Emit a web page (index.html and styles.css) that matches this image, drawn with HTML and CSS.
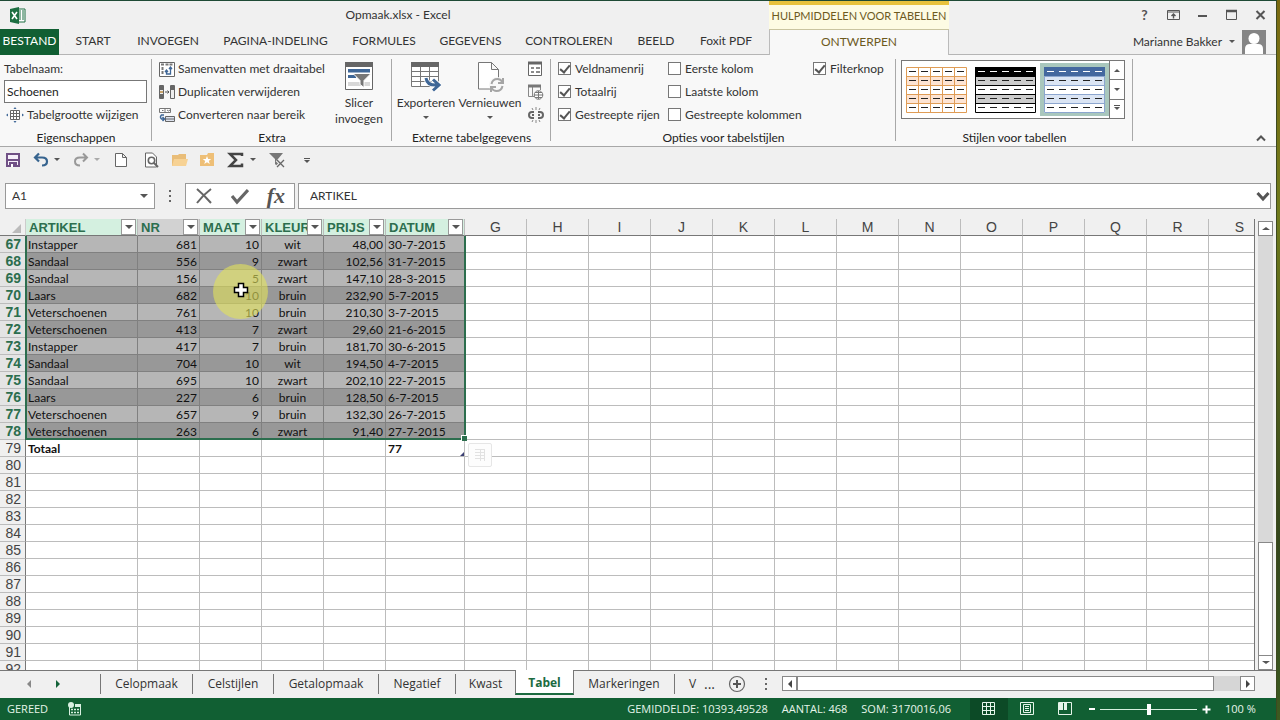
FILE: index.html
```html
<!DOCTYPE html>
<html lang="nl">
<head>
<meta charset="utf-8">
<title>Opmaak.xlsx - Excel</title>
<link rel="stylesheet" href="styles.css">
</head>
<body>
<div class="window">
  <header class="top">
    <div class="top-left">
      <div class="titlebar">
        <svg class="logo" width="18" height="17" viewBox="0 0 18 17"><path d="M9 2h7v13H9z" fill="#fff" stroke="#1d6f42"/><path d="M10 4h2M13 4h2M10 6h2M13 6h2M10 8h2M13 8h2M10 10h2M13 10h2M10 12h2M13 12h2" stroke="#1d6f42"/><path d="M1 2l9-2v17l-9-2z" fill="#1d6f42"/><path d="M3 5l5 7M8 5l-5 7" stroke="#fff" stroke-width="1.6"/></svg>
        <h1 class="title">Opmaak.xlsx - Excel</h1>
      </div>
      <nav class="tabs">
        <button class="tab file">BESTAND</button>
        <button class="tab w64">START</button>
        <button class="tab w86">INVOEGEN</button>
        <button class="tab w129">PAGINA-INDELING</button>
        <button class="tab w88">FORMULES</button>
        <button class="tab w85">GEGEVENS</button>
        <button class="tab w112">CONTROLEREN</button>
        <button class="tab w62">BEELD</button>
        <button class="tab w78">Foxit PDF</button>
      </nav>
    </div>
    <div class="context">
      <div class="context-title">HULPMIDDELEN VOOR TABELLEN</div>
      <button class="tab active">ONTWERPEN</button>
    </div>
    <div class="top-right">
      <div class="sys">
        <button class="sysbtn help" aria-label="Help">?</button>
        <button class="sysbtn" aria-label="Weergaveopties"><svg width="13" height="12" viewBox="0 0 13 12"><path d="M.5 1.5h12v9H.5zM.5 3h12" fill="none" stroke="#555"/><path d="M6.500 9.500V5M4.500 7l2-2 2 2" fill="none" stroke="#555" stroke-width="1.400"/></svg></button>
        <button class="sysbtn" aria-label="Minimaliseren"><svg width="11" height="12" viewBox="0 0 11 12"><path d="M1 7h9" stroke="#555" stroke-width="2"/></svg></button>
        <button class="sysbtn" aria-label="Maximaliseren"><svg width="11" height="12" viewBox="0 0 11 12"><path d="M.5 1.500h10v9H.5z" fill="none" stroke="#555"/><path d="M0 2h11" stroke="#555" stroke-width="2.500"/></svg></button>
        <button class="sysbtn" aria-label="Sluiten"><svg width="11" height="12" viewBox="0 0 11 12"><path d="M1.500 2l8 8M9.500 2l-8 8" stroke="#555" stroke-width="2"/></svg></button>
      </div>
      <div class="user"><span>Marianne Bakker</span><i class="caret"></i>
        <svg width="24" height="24" viewBox="0 0 24 24"><path d="M0 0h24v24H0z" fill="#858585"/><circle cx="12" cy="8.500" r="5.500" fill="#fff"/><path d="M3 24v-5q0-5 5-5h8q5 0 5 5v5z" fill="#fff"/></svg>
      </div>
    </div>
  </header>

  <section class="ribbon">
    <div class="group g-props">
      <div class="content col">
        <label class="line" for="tname">Tabelnaam:</label>
        <input id="tname" class="name-input" value="Schoenen">
        <button class="line cmd"><svg width="18" height="16" viewBox="0 0 18 16"><path d="M4.500 3.500h9v9h-9zM4.500 6.500h9M4.500 9.500h9M7.500 3.500v9M10.500 3.500v9" fill="#fff" stroke="#666"/><path d="M0 8l2-1.500v3zM18 8l-2-1.500v3zM9 0l1.500 2h-3zM9 16l1.500-2h-3z" fill="#3f6797"/></svg>Tabelgrootte wijzigen</button>
      </div>
      <div class="caption">Eigenschappen</div>
    </div>
    <div class="group g-extra">
      <div class="content">
        <div class="col">
          <button class="line cmd"><svg width="16" height="16" viewBox="0 0 16 16"><path d="M.5 1.500h15v14H.5z" fill="#fff" stroke="#666"/><path d="M2 3.500h3M6.500 3.500h7M3.500 6v8" stroke="#777" stroke-width="2" stroke-dasharray="3 1"/><path d="M7.500 10v3h4V7M6 11l1.500-2L9 11M10 8l1.500-2L13 8" fill="none" stroke="#3f6797" stroke-width="1.300"/></svg>Samenvatten met draaitabel</button>
          <button class="line cmd"><svg width="16" height="16" viewBox="0 0 16 16"><path d="M.5 1.500h4v13h-4zM11.500 1.500h4v13h-4z" fill="#eee" stroke="#666"/><path d="M1 2h3v4H1zM1 10h3v4H1zM12 2h3v4h-3z" fill="#666"/><path d="M1 7h3v2H1z" fill="#c9a46b"/><path d="M6 8h4M8.500 6.500L10 8 8.500 9.500" fill="none" stroke="#555"/></svg>Duplicaten verwijderen</button>
          <button class="line cmd"><svg width="16" height="16" viewBox="0 0 16 16"><path d="M.5 1.500h11v4H.5zM6 1.500v4M3 3.500h1.500M8 3l1.500 1L11 3" fill="#fff" stroke="#777"/><path d="M6.500 9.500h9v5h-9zM6.500 12h9" fill="#dde3ef" stroke="#666"/><path d="M5 8H2.500q-2 2 0 4H5M3.500 10L5.500 12l-2 2" fill="none" stroke="#3f6797" stroke-width="1.500"/></svg>Converteren naar bereik</button>
        </div>
        <button class="big w66"><svg width="29" height="30" viewBox="0 0 29 30"><path d="M.5 2.500h27v26H.5z" fill="#fff" stroke="#666"/><path d="M0 1h28v5H0z" fill="#666"/><path d="M3 8h22v3.500H3zM3 14h8v3H3z" fill="#3f6797"/><path d="M3 21h22v4H3z" fill="#d8d8d8"/><path d="M8 12.500h18l-7 7v7l-4-3v-4z" fill="#777" stroke="#fff"/></svg><span>Slicer</span><span>invoegen</span></button>
      </div>
      <div class="caption">Extra</div>
    </div>
    <div class="group g-ext">
      <div class="content">
        <button class="big w64"><svg width="30" height="32" viewBox="0 0 30 32"><path d="M.5 1.500h27v24H.5zM.5 10.500h27M.5 15.500h27M.5 20.500h27M9.500 5v20M18.500 5v20" fill="#fff" stroke="#777"/><path d="M0 1h28v5H0z" fill="#666"/><path d="M15 17q1 8 12 7M22 18.500l6 5.500-6 5.500" fill="none" stroke="#fff" stroke-width="5"/><path d="M15 17q1 8 12 7M22 18.500l6 5.500-6 5.500" fill="none" stroke="#3f6797" stroke-width="3"/></svg><span>Exporteren</span><i class="caret"></i></button>
        <button class="big w64"><svg width="30" height="32" viewBox="0 0 30 32"><path d="M3.500 1.500h13l7 7v19.500h-20zM16.500 1.500v7h7" fill="#fff" stroke="#777"/><circle cx="22" cy="24" r="8" fill="#f8f8f8"/><path d="M16.500 23q1-5 6-5 3 0 5 3M28 17v5h-5M27.500 25q-1 5-6 5-3 0-5-3M16 31v-5h5" fill="none" stroke="#a5a5a5" stroke-width="2"/></svg><span>Vernieuwen</span><i class="caret"></i></button>
        <div class="col smalls">
          <button class="line" aria-label="Eigenschappen"><svg width="15" height="16" viewBox="0 0 15 16"><path d="M.5 1.500h13v13H.5z" fill="#fff" stroke="#666"/><path d="M0 2h14" stroke="#666" stroke-width="3"/><path d="M3 7h3M8 7h4M3 11h3M8 11h4" stroke="#666" stroke-width="1.500"/></svg></button>
          <button class="line" aria-label="Openen in browser"><svg width="16" height="16" viewBox="0 0 16 16"><path d="M7 12.500H.5v-11h12V6M4.500 3v9" fill="none" stroke="#888"/><path d="M0 2h13" stroke="#777" stroke-width="3"/><circle cx="10.500" cy="11" r="4.300" fill="#fff" stroke="#777"/><path d="M6 11h9M7 8.500h7M7 13.500h7M10.500 7v8" stroke="#777"/></svg></button>
          <button class="line" aria-label="Ontkoppelen"><svg width="16" height="16" viewBox="0 0 16 16"><path d="M6 5H4Q1 5 1 8t3 3h2M10 5h2q3 0 3 3t-3 3h-2M4 8h2M10 8h2" fill="none" stroke="#666" stroke-width="2"/><path d="M5 3L4 1M8 3V0M11 3l1-2M5 13l-1 2M8 13v3M11 13l1 2" stroke="#888"/></svg></button>
        </div>
      </div>
      <div class="caption">Externe tabelgegevens</div>
    </div>
    <div class="group g-opts">
      <div class="content checks">
        <label class="line chk"><input type="checkbox" checked>Veldnamenrij</label>
        <label class="line chk"><input type="checkbox">Eerste kolom</label>
        <label class="line chk"><input type="checkbox" checked>Filterknop</label>
        <label class="line chk"><input type="checkbox" checked>Totaalrij</label>
        <label class="line chk"><input type="checkbox">Laatste kolom</label>
        <i></i>
        <label class="line chk"><input type="checkbox" checked>Gestreepte rijen</label>
        <label class="line chk"><input type="checkbox">Gestreepte kolommen</label>
      </div>
      <div class="caption">Opties voor tabelstijlen</div>
    </div>
    <div class="group g-styles">
      <div class="content">
        <div class="gallery">
          <button class="style" aria-label="Oranje stijl"><svg width="61" height="46" viewBox="0 0 61 46"><path d="M0 0h61v46H0z" fill="#fff"/><path d="M0 9h61v9H0zM0 27h61v9H0z" fill="#fde4d3"/><path d="M.5.5h60v45H.5zM.5 9.500h60M.5 18.500h60M.5 27.500h60M.5 36.500h60M12.500 0v46M24.500 0v46M36.500 0v46M48.500 0v46" fill="none" stroke="#df9c55"/><path d="M3 4.500h56M3 13.500h56M3 22.500h56M3 31.500h56M3 40.500h56" stroke="#222" stroke-dasharray="7 5"/></svg></button>
          <button class="style" aria-label="Zwarte stijl"><svg width="61" height="46" viewBox="0 0 61 46"><path d="M0 0h61v46H0z" fill="#fff"/><path d="M0 9h61v9H0zM0 27h61v9H0z" fill="#ccc"/><path d="M.5.5h60v45H.5zM.5 9.500h60M.5 18.500h60M.5 27.500h60M.5 36.500h60" fill="none" stroke="#000"/><path d="M0 0h61v9H0z"/><path d="M3 4.500h56" stroke="#fff" stroke-dasharray="7 5"/><path d="M3 13.500h56M3 22.500h56M3 31.500h56M3 40.500h56" stroke="#222" stroke-dasharray="7 5"/></svg></button>
          <button class="style chosen" aria-label="Blauwe stijl"><svg width="61" height="46" viewBox="0 0 61 46"><path d="M0 0h61v46H0z" fill="#fff"/><path d="M0 9h61v9H0zM0 27h61v9H0z" fill="#dbe5f4"/><path d="M.5.5h60v45H.5zM.5 9.500h60M.5 18.500h60M.5 27.500h60M.5 36.500h60" fill="none" stroke="#8ca6cf"/><path d="M0 0h61v9H0z" fill="#44689f"/><path d="M3 4.500h56" stroke="#fff" stroke-dasharray="7 5"/><path d="M3 13.500h56M3 22.500h56M3 31.500h56M3 40.500h56" stroke="#222" stroke-dasharray="7 5"/></svg></button>
          <div class="gallery-nav">
            <button aria-label="Omhoog"><i class="caret up"></i></button>
            <button aria-label="Omlaag"><i class="caret"></i></button>
            <button aria-label="Meer"><i class="caret bar"></i></button>
          </div>
        </div>
      </div>
      <div class="caption">Stijlen voor tabellen</div>
    </div>
    <button class="collapse" aria-label="Lint samenvouwen"><svg width="10" height="8" viewBox="0 0 10 8"><path d="M1 6.500l4-4 4 4" fill="none" stroke="#555" stroke-width="2"/></svg></button>
  </section>

  <div class="qat">
    <button class="q w28" aria-label="Opslaan"><svg width="16" height="16" viewBox="0 0 16 16"><path d="M2 2h12v12H2z" fill="#f6f0fa" stroke="#705085" stroke-width="2"/><path d="M3 8h10" stroke="#705085" stroke-width="2"/><path d="M4 10h8v5H4z" fill="#705085"/><path d="M6 12h2v3H6z" fill="#fff"/></svg></button>
    <button class="q w40" aria-label="Ongedaan maken"><svg width="16" height="16" viewBox="0 0 16 16"><path d="M2 5.500h7q5 0 5 4t-5 4M6 1.500l-4 4 4 4" fill="none" stroke="#37648f" stroke-width="2.200"/></svg><i class="caret"></i></button>
    <button class="q w40" aria-label="Opnieuw"><svg width="16" height="16" viewBox="0 0 16 16"><path d="M14 5.500H7q-5 0-5 4t5 4M10 1.500l4 4-4 4" fill="none" stroke="#999" stroke-width="2"/></svg><i class="caret pale"></i></button>
    <button class="q w30" aria-label="Nieuw"><svg width="16" height="16" viewBox="0 0 16 16"><path d="M2.500 1.500h7l4 4v9h-11zM9.500 1.500v4h4" fill="#fff" stroke="#666"/></svg></button>
    <button class="q w28" aria-label="Afdrukvoorbeeld"><svg width="16" height="16" viewBox="0 0 16 16"><path d="M2.500 1h7l4 4v10h-11z" fill="#fff" stroke="#666"/><circle cx="8.500" cy="8.500" r="3.200" fill="#fff" stroke="#666" stroke-width="1.600"/><path d="M11 11l4 4" stroke="#666" stroke-width="2"/></svg></button>
    <button class="q w28" aria-label="Openen"><svg width="18" height="16" viewBox="0 0 18 16"><path d="M1 14V3h6l1-1h7v12z" fill="#e9bd78"/><path d="M3 7h14l-2 7H1z" fill="#f7d294"/></svg></button>
    <button class="q w28" aria-label="Favorieten"><svg width="16" height="16" viewBox="0 0 16 16"><path d="M1 14V3h7l1-2h6v13z" fill="#eebf77"/><path d="M8 4l1.200 3h3L9.800 9l1 3L8 10.200 5.200 12l1-3-2.400-2h3z" fill="#fff"/></svg></button>
    <button class="q w42" aria-label="AutoSom"><svg width="18" height="16" viewBox="0 0 18 16"><path d="M15 4V2H3l6 6-6 6h12v-2.500" fill="none" stroke="#444" stroke-width="2.500"/></svg><i class="caret"></i></button>
    <button class="q w28" aria-label="Filter wissen"><svg width="17" height="16" viewBox="0 0 17 16"><path d="M0 1h14L9 7v8l-3-3V7z" fill="#777"/><path d="M8 8l7 7M15 8l-7 7" stroke="#eee" stroke-width="3.500"/><path d="M8 8l7 7M15 8l-7 7" stroke="#666" stroke-width="1.300"/></svg></button>
    <button class="q w28" aria-label="Aanpassen"><i class="caret bar"></i></button>
  </div>

  <div class="formula">
    <div class="namebox"><input aria-label="Naamvak" value="A1"><i class="caret big-caret"></i></div>
    <svg class="dots" width="4" height="14" viewBox="0 0 4 14"><path d="M1 1h2v2H1zM1 6h2v2H1zM1 11h2v2H1z" fill="#666"/></svg>
    <div class="fx">
      <button aria-label="Annuleren"><svg width="18" height="18" viewBox="0 0 18 18"><path d="M2 2q7 6 14 14M16 2Q8 8 2 16" fill="none" stroke="#666" stroke-width="2"/></svg></button>
      <button aria-label="Invoeren"><svg width="18" height="18" viewBox="0 0 18 18"><path d="M1 9l5 6L17 3" fill="none" stroke="#666" stroke-width="3.200"/></svg></button>
      <button class="fxlabel">fx</button>
    </div>
    <div class="fbox"><input aria-label="Formulebalk" value="ARTIKEL"><svg width="14" height="12" viewBox="0 0 14 12"><path d="M1.500 3L7 9l5.500-6" fill="none" stroke="#555" stroke-width="3"/></svg></div>
  </div>

  <main class="sheet">
    <div class="grid">
      <table class="cells">
        <colgroup id="cols"></colgroup>
        <thead id="head"></thead>
        <tbody id="rows"></tbody>
      </table>
      <div class="selection"><i class="handle"></i></div>
      <i class="resize"></i>
      <div class="quick"><svg width="12" height="14" viewBox="0 0 12 14"><path d="M1 1.500h10M1 4.500h10M1 7.500h10M1 10.500h10M6.500 1v12M10.500 1v12" stroke="#e2e2e2" fill="none"/></svg></div>
      <div class="spot"></div>
      <svg class="cursor" width="16" height="16" viewBox="0 0 16 16"><path d="M5.500 1.500h5v4h4v5h-4v4h-5v-4h-4v-5h4z" fill="#fff" stroke="#000" stroke-width="1.500"/></svg>
    </div>
    <div class="vscroll">
      <button aria-label="Omhoog"><i class="caret up"></i></button>
      <div class="vtrack"><div class="vthumb"></div></div>
      <button aria-label="Omlaag"><i class="caret"></i></button>
    </div>
  </main>

  <footer>
    <div class="sheets">
      <div class="arrows"><svg width="6" height="8" viewBox="0 0 6 8"><path d="M5 0v8L1 4z" fill="#888"/></svg><svg width="6" height="8" viewBox="0 0 6 8"><path d="M1 0v8l4-4z" fill="#14633a"/></svg></div>
      <button class="stab s92">Celopmaak</button>
      <button class="stab s81">Celstijlen</button>
      <button class="stab s105">Getalopmaak</button>
      <button class="stab s77">Negatief</button>
      <button class="stab s59 last">Kwast</button>
      <button class="stab s59 on">Tabel</button>
      <button class="stab s101">Markeringen</button>
      <button class="stab cut">V</button>
      <span class="more">...</span>
      <button class="add" aria-label="Nieuw blad"><svg width="18" height="18" viewBox="0 0 18 18"><circle cx="9" cy="9" r="7.500" fill="none" stroke="#666" stroke-width="1.200"/><path d="M5 9h8M9 5v8" stroke="#555" stroke-width="2"/></svg></button>
      <svg class="dots" width="4" height="14" viewBox="0 0 4 14"><path d="M1 1h2v2H1zM1 6h2v2H1zM1 11h2v2H1z" fill="#666"/></svg>
      <div class="hscroll">
        <button aria-label="Links"><i class="caret left"></i></button>
        <div class="hthumb"></div><div class="htrack"></div>
        <button aria-label="Rechts"><i class="caret right"></i></button>
      </div>
    </div>
    <div class="status">
      <span class="ready">GEREED</span>
      <svg width="14" height="14" viewBox="0 0 14 14"><path d="M1.500 5v8h11V3H7" fill="none" stroke="#d8f0e0"/><path d="M7 2h6v3H7z" fill="#d8f0e0"/><circle cx="3" cy="3" r="3" fill="#d8f0e0"/><path d="M3 7.500h9M3 10.500h9" stroke="#d8f0e0" stroke-dasharray="2 1" stroke-width="1.500"/></svg>
      <div class="stats"><span>GEMIDDELDE: 10393,49528</span><span>AANTAL: 468</span><span>SOM: 3170016,06</span></div>
      <button class="view current" aria-label="Normaal"><svg width="14" height="14" viewBox="0 0 14 14"><path d="M.5.5h12v12H.5zM.5 4.500h12M.5 8.500h12M4.500.5v12M8.500.5v12" fill="none" stroke="#e6f5ea"/></svg></button>
      <button class="view" aria-label="Pagina-indeling"><svg width="14" height="14" viewBox="0 0 14 14"><path d="M.5.500h13v12H.5z" fill="none" stroke="#e6f5ea"/><path d="M3.500 2.500h7v8h-7zM5 4.500h4M5 6.500h4M5 8.500h4" fill="none" stroke="#e6f5ea"/></svg></button>
      <button class="view" aria-label="Pagina-eindevoorbeeld"><svg width="14" height="14" viewBox="0 0 14 14"><path d="M.5.500h13v12H.5z" fill="none" stroke="#e6f5ea"/><path d="M1 1h4v7H1zM6 1h3v7H6z" fill="#e6f5ea"/></svg></button>
      <div class="zoom"><span class="minus"></span><input type="range" aria-label="Zoomen" min="0" max="100" value="50"><svg width="9" height="9" viewBox="0 0 9 9"><path d="M.5 4.500h8M4.500.5v8" stroke="#fff" stroke-width="2"/></svg></div>
      <span class="pct">100 %</span>
    </div>
  </footer>
</div>
<script src="app.js"></script>
</body>
</html>
```
FILE: styles.css
```css
* { box-sizing: border-box; }
html, body { margin: 0; height: 100%; }
body { background: linear-gradient(#7a6a10, #6f7a1c 30%, #33451c 75%, #3d5a20); font: 12px/16px Lato, "Open Sans", sans-serif; color: #333; overflow: hidden; }
button, input { font: inherit; color: inherit; }
button { border: 0; background: none; padding: 0; white-space: nowrap; }
input { margin: 0; min-width: 0; outline: 0; }
svg { display: block; flex: none; }
.window { height: 100vh; margin-right: 3px; display: flex; flex-direction: column; background: #f0f0f0; border-top: 1px solid #1e4a35; border-right: 1px solid #3d4a20; }

.caret { display: block; flex: none; width: 0; height: 0; border: 3px solid transparent; border-top-color: #555; border-bottom: 0; }
.caret.up { border-top: 0; border-bottom: 3px solid #555; }
.caret.left { border: 4px solid transparent; border-right-color: #444; border-left: 0; }
.caret.right { border: 4px solid transparent; border-left-color: #444; border-right: 0; }
.caret.pale { border-top-color: #aaa; }
.caret.bar { position: relative; }
.caret.bar::before { content: ""; position: absolute; left: -3px; top: -5px; width: 6px; height: 1px; background: #555; }
.big-caret { border-width: 4px; border-bottom: 0; }

.top { display: flex; height: 54px; flex: none; }
.top-left, .context, .top-right { display: flex; flex-direction: column; }
.titlebar { display: flex; align-items: center; height: 28px; padding-left: 9px; }
.title { margin: 0; flex: 1; text-align: center; font-size: 12px; font-weight: 400; }
.tabs { display: flex; height: 26px; border-bottom: 1px solid #b5b5b5; padding-right: 4px; }
.tab { text-align: center; height: 24px; }
.file { width: 59px; height: 26px; padding-bottom: 2px; margin-right: 2px; background: #115f33; color: #fff; }
.w64 { width: 64px; } .w86 { width: 86px; } .w129 { width: 129px; } .w88 { width: 88px; } .w85 { width: 85px; }
.w112 { width: 112px; } .w62 { width: 62px; } .w78 { width: 78px; } .w66 { width: 66px; }
.context { width: 180px; color: #6d5a1e; }
.context-title { height: 29px; font-size: 11px; line-height: 22px; background: #fdfbe3; border-top: 4px solid #e8c23c; border-bottom: 1px solid #c9c4a0; text-align: center; white-space: nowrap; }
.active { height: 25px; padding-bottom: 2px; background: #f8f8f8; border: 1px solid #bbb; border-width: 0 1px; }
.top-right { flex: 1; border-bottom: 1px solid #b5b5b5; }
.sys { display: flex; justify-content: flex-end; align-items: center; height: 28px; padding-right: 1px; }
.sysbtn { width: 29px; height: 20px; display: flex; justify-content: center; align-items: center; color: #555; }
.sysbtn.help { font-weight: 700; font-size: 14px; }
.user { display: flex; flex: 1; justify-content: flex-end; align-items: center; gap: 7px; padding-right: 10px; }

.ribbon { flex: none; display: flex; height: 92px; background: #f8f8f8; border-bottom: 1px solid #a8a8a8; }
.group { display: flex; flex-direction: column; position: relative; padding-top: 2px; }
.group::after { content: ""; position: absolute; right: 0; top: 4px; bottom: 5px; width: 1px; background: #a8a8a8; }
.g-props { width: 152px; } .g-extra { width: 240px; } .g-ext { width: 159px; } .g-opts { width: 345px; } .g-styles { width: 237px; }
.content { display: flex; height: 73px; }
.col { display: flex; flex-direction: column; }
.line { height: 23px; display: flex; align-items: center; white-space: nowrap; gap: 3px; }
.g-props .content { padding: 0 4px; }
.g-props .cmd { padding-left: 2px; }
.name-input { height: 23px; width: 143px; border: 1px solid #777; background: #fff; color: #222; padding: 0 2px; }
.caption { text-align: center; color: #222; white-space: nowrap; }
.g-extra .col { padding-left: 7px; width: 174px; }
.g-ext .content { padding-left: 2px; }
.big { display: flex; flex-direction: column; align-items: center; padding-top: 4px; line-height: 16px; }
.big.w66 svg { margin-bottom: 4px; }
.big.w64 svg { margin-bottom: 2px; }
.big .caret { margin-top: 5px; }
.smalls { padding-left: 6px; }
.checks { display: grid; grid-template-columns: 110px 145px auto; grid-auto-rows: 23px; padding-left: 7px; }
.chk { gap: 4px; }
.chk input { appearance: none; width: 13px; height: 13px; border: 1px solid #777; background: #fff; display: grid; place-items: center; }
.chk input:checked::before { content: ""; width: 4px; height: 8px; border: solid #555; border-width: 0 2px 2px 0; transform: rotate(40deg); margin-bottom: 2px; }
.gallery { display: flex; width: 224px; height: 59px; margin: 3px 0 0 5px; border: 1px solid #777; background: #fff; }
.style { width: 69px; display: flex; justify-content: center; align-items: center; }
.style.chosen { background: #a9c7bd; margin: 2px 0; }
.gallery-nav { flex: 1; display: flex; flex-direction: column; border-left: 1px solid #777; }
.gallery-nav button { flex: 1; display: flex; align-items: center; justify-content: center; }
.gallery-nav button + button { border-top: 1px solid #777; }
.collapse { margin: auto 10px 4px auto; }

.qat { flex: none; display: flex; height: 27px; align-items: center; padding: 0 0 2px 5px; }
.q { display: flex; align-items: center; height: 20px; gap: 5px; }
.q.w28 { width: 28px; } .q.w30 { width: 30px; } .q.w40 { width: 40px; } .q.w42 { width: 42px; }
.q:last-child { padding-left: 7px; padding-top: 3px; }
.formula { flex: none; display: flex; height: 45px; padding: 9px 5px 10px 5px; align-items: stretch; color: #333; }
.namebox { width: 150px; display: flex; align-items: center; background: #fff; border: 1px solid #999; padding-right: 6px; }
.namebox input, .fbox input { flex: 1; border: 0; background: none; padding: 0 6px; }
.fbox input { padding: 0 11px; }
.formula .dots { align-self: center; margin: 0 13px 0 13px; }
.fx { width: 110px; display: flex; background: #fff; border: 1px solid #999; align-items: center; justify-content: space-around; }
.fxlabel { font: italic 700 22px/20px "Liberation Serif", serif; color: #555; }
.fbox { flex: 1; margin-left: 3px; background: #fff; border: 1px solid #999; display: flex; align-items: center; }

.sheet { flex: 1; min-height: 0; display: flex; }
.grid { flex: 1; min-width: 0; position: relative; overflow: hidden; background: #fff; border-right: 1px solid #777; }
.cells { table-layout: fixed; width: 1271px; border-collapse: separate; border-spacing: 0; color: #111; }
.cells th, .cells td { height: 17px; padding: 1px 2px 0; line-height: 15px; border-right: 1px solid #bcbcbc; border-bottom: 1px solid #bcbcbc; white-space: nowrap; overflow: hidden; }
.cells th { background: #f0f0f0; font: 14px/15px "Liberation Sans", Arial, sans-serif; color: #444; }
.cells thead th { border-bottom-color: #777; }
.cells tbody th { text-align: right; padding-right: 4px; border-right-color: #777; }
.cells tbody .sel-row { font-weight: 700; color: #2c6e4e; background: #e4e4e4; }
.cells thead .sel { background: #d4f0e0; color: #2c6e4e; font-size: 13px; font-weight: 700; padding: 0 1px 0 3px; }
.cells thead .plain { background: #d2d2d2; }
.cells thead .corner { border-right-color: #ccc; vertical-align: bottom; }
.corner svg { margin: 0 0 2px 10px; }
.hd { display: flex; }
.hd span { flex: 1; min-width: 0; overflow: hidden; text-align: left; padding-top: 1px; }
.hd button { width: 15px; height: 16px; background: #fff; border: 1px solid #999; display: flex; align-items: center; justify-content: center; flex: none; }
.cells .odd td { background: #b6b6b6; }
.cells .even td { background: #989898; }
.cells .picked td:nth-child(-n+7) { border-color: #808080; }
.cells .odd td:nth-child(n+8), .cells .even td:nth-child(n+8) { background: #fff; }
.cells .r { text-align: right; }
.cells .c { text-align: center; }
.cells .total td { font-weight: 700; }
.selection { position: absolute; left: 25px; top: 17px; width: 441px; height: 204px; border: 2px solid #2c6e4e; border-top: 0; }
.handle { position: absolute; right: -3px; bottom: -3px; width: 6px; height: 6px; background: #2c6e4e; border: solid #fff; border-width: 1px 0 0 1px; }
.resize { position: absolute; left: 460px; top: 233px; border: 2px solid #3b3f73; border-left-color: transparent; border-top-color: transparent; }
.quick { position: absolute; left: 468px; top: 224px; width: 24px; height: 24px; border: 1px solid #e6e6e6; border-radius: 2px; background: #fdfdfd; display: grid; place-items: center; }
.spot { position: absolute; left: 213px; top: 45px; width: 55px; height: 55px; border-radius: 50%; background: rgba(226, 226, 90, .6); }
.cursor { position: absolute; left: 233px; top: 63px; }
.vscroll { width: 21px; padding: 2px 3px 0; display: flex; flex-direction: column; }
.vscroll button, .hscroll button { width: 15px; height: 15px; flex: none; background: #fff; border: 1px solid #888; display: flex; align-items: center; justify-content: center; }
.vscroll .caret { border-left-width: 4px; border-right-width: 4px; }
.vtrack { flex: 1; background: #d9d9d9; display: flex; flex-direction: column; justify-content: flex-end; }
.vthumb { height: 27%; background: #fff; border: 1px solid #888; border-bottom: 0; }

footer { flex: none; font-family: "Open Sans", "Noto Sans", sans-serif; }
.sheets { display: flex; align-items: center; height: 28px; border-top: 1px solid #777; padding: 0 21px 2px 0; }
.arrows { display: flex; width: 101px; gap: 23px; padding-left: 26px; border-right: 1px solid #777; height: 20px; align-items: center; }
.stab { height: 20px; border-right: 1px solid #777; }
.s92 { width: 92px; } .s81 { width: 81px; } .s105 { width: 105px; } .s77 { width: 77px; } .s59 { width: 59px; } .s101 { width: 101px; }
.stab.last { border-right: 0; }
.stab.on { align-self: flex-start; height: 25px; margin-top: -1px; padding-top: 2px; background: #fff; border: 1px solid #777; border-width: 0 1px 2px; border-bottom-color: #1c6b40; color: #1c6b40; font-weight: 700; }
.stab.cut { width: 22px; padding-left: 14px; border: 0; text-align: left; }
.more { width: 31px; padding-left: 7px; font-size: 14px; }
.add { margin-right: 18px; }
.sheets .dots { margin-right: 14px; }
.hscroll { flex: 1; display: flex; height: 15px; }
.hthumb { flex: 1; background: #fff; border: 1px solid #888; }
.htrack { width: 26px; background: #d6d6d6; }
.status { display: flex; align-items: center; height: 22px; background: #115f33; color: #e6f5ea; padding-left: 7px; font-size: 11px; white-space: nowrap; }
.ready { width: 61px; }
.stats { margin-left: auto; display: flex; gap: 14px; padding-right: 19px; }
.view { width: 38px; height: 22px; display: flex; align-items: center; justify-content: center; }
.view.current { background: #0c4a26; }
.zoom { display: flex; align-items: center; margin-left: 5px; width: 122px; gap: 5px; }
.minus { width: 6px; height: 2px; background: #fff; }
.zoom input { appearance: none; flex: 1; height: 12px; background: linear-gradient(#d8f0e0, #d8f0e0) center / 100% 1px no-repeat; }
.zoom input::-webkit-slider-thumb { appearance: none; width: 4px; height: 11px; background: #fff; }
.pct { width: 65px; padding-left: 14px; }
```
FILE: app.js
```js
const widths = [26, 112, 62, 62, 62, 62, 79].concat(Array(13).fill(62));
const fields = ["ARTIKEL", "NR", "MAAT", "KLEUR", "PRIJS", "DATUM"];
const letters = "GHIJKLMNOPQRS".split("");
const data = [
  ["Instapper", 681, 10, "wit", "48,00", "30-7-2015"],
  ["Sandaal", 556, 9, "zwart", "102,56", "31-7-2015"],
  ["Sandaal", 156, 5, "zwart", "147,10", "28-3-2015"],
  ["Laars", 682, 10, "bruin", "232,90", "5-7-2015"],
  ["Veterschoenen", 761, 10, "bruin", "210,30", "3-7-2015"],
  ["Veterschoenen", 413, 7, "zwart", "29,60", "21-6-2015"],
  ["Instapper", 417, 7, "bruin", "181,70", "30-6-2015"],
  ["Sandaal", 704, 10, "wit", "194,50", "4-7-2015"],
  ["Sandaal", 695, 10, "zwart", "202,10", "22-7-2015"],
  ["Laars", 227, 6, "bruin", "128,50", "6-7-2015"],
  ["Veterschoenen", 657, 9, "bruin", "132,30", "26-7-2015"],
  ["Veterschoenen", 263, 6, "zwart", "91,40", "27-7-2015"],
  ["Totaal", "", "", "", "", "77"]
];
const align = ["", "r", "r", "c", "r", ""];

document.getElementById("cols").innerHTML =
  widths.map(w => `<col style="width:${w}px">`).join("");

document.getElementById("head").innerHTML =
  '<tr><th class="corner"><svg width="9" height="9" viewBox="0 0 9 9"><path d="M9 0v9H0z" fill="#bbb"/></svg></th>' +
  fields.map((f, i) => `<th class="sel${i === 1 ? " plain" : ""}"><div class="hd"><span>${f}</span><button aria-label="Filter ${f}"><i class="caret big-caret"></i></button></div></th>`).join("") +
  letters.map(l => `<th>${l}</th>`).join("") + "</tr>";

let html = "";
for (let n = 67; n <= 92; n++) {
  const row = data[n - 67] || ["", "", "", "", "", ""];
  const picked = n < 79;
  const cls = picked ? "picked " + (n % 2 ? "odd" : "even") : n === 79 ? "total" : "";
  html += `<tr class="${cls}"><th${picked ? ' class="sel-row"' : ""}>${n}</th>` +
    row.map((v, i) => `<td class="${align[i]}">${v}</td>`).join("") +
    "<td></td>".repeat(13) + "</tr>";
}
document.getElementById("rows").innerHTML = html;
```
